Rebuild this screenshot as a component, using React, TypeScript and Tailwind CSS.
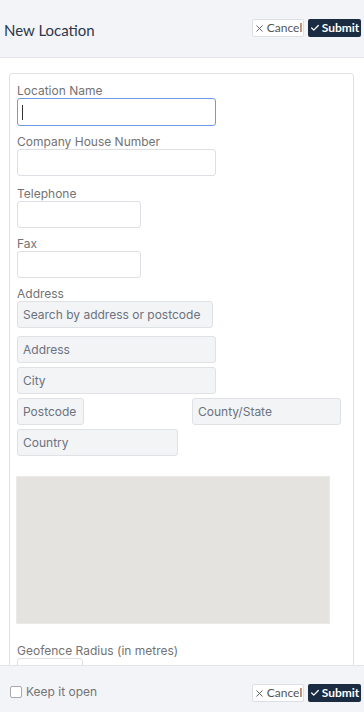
import { Check, X } from 'lucide-react'

const label = 'block text-[12px] leading-[14px] text-[#737373]'
const input = 'block h-[27px] rounded-[3px] border border-[#dcdfe4] bg-white'
const filled = 'flex items-center h-[27px] rounded-[3px] border border-[#dfe1e5] bg-[#f3f4f6] px-[5px] text-[12px] whitespace-nowrap text-[#6b7280]'

function Buttons() {
  return (
    <div className="flex items-center gap-[4px] font-['Lato',sans-serif]">
      <button className="flex items-center justify-center w-[52px] h-[18px] border border-[#dcdfe4] rounded-[2px] bg-white text-[12px] text-[#555]">
        <X size={11} strokeWidth={2} className="mr-[2px]" />Cancel
      </button>
      <button className="flex items-center justify-center w-[53px] h-[18px] rounded-[2px] bg-[#1a2b42] text-[12px] font-bold text-white">
        <Check size={10} strokeWidth={3} className="mr-[2px]" />Submit
      </button>
    </div>
  )
}

export default function App() {
  return (
    <div className="h-[712px] w-[364px] flex flex-col overflow-hidden bg-white font-['Inter',sans-serif]">
      <div className="h-[58px] shrink-0 flex items-center justify-between pl-[4px] pr-[3px] bg-[#f3f4f8] border-b border-[#e3e5ea]">
        <span className="text-[15px] text-[#2d3748] font-['Lato',sans-serif] mt-[3px]">New Location</span>
        <div className="-mt-[1px]"><Buttons /></div>
      </div>

      <div className="flex-1 overflow-hidden pt-[15px] pl-[9px] pr-[10px]">
        <div className="border border-[#e2e2e2] rounded-[3px] pl-[7px] pr-[12px] pt-[10px] pb-[20px]">
          <label className={label}>Location Name</label>
          <div className="h-[28px] w-[199px] rounded-[3px] border-[1.5px] border-[#6d9be8] bg-white flex items-center pl-[4px]">
            <span className="block w-px h-[15px] bg-[#333]" />
          </div>

          <label className={`${label} mt-[9px]`}>Company House Number</label>
          <div className={`${input} w-[199px]`} />

          <label className={`${label} mt-[11px]`}>Telephone</label>
          <div className={`${input} w-[124px]`} />

          <label className={`${label} mt-[9px]`}>Fax</label>
          <div className={`${input} w-[124px]`} />

          <label className={`${label} mt-[9px]`}>Address</label>
          <div className={`${filled} w-[196px]`}>Search by address or postcode</div>

          <div className={`${filled} w-[199px] mt-[8px]`}>Address</div>
          <div className={`${filled} w-[199px] mt-[4px]`}>City</div>
          <div className="flex justify-between mt-[4px]">
            <div className={`${filled} w-[67px]`}>Postcode</div>
            <div className={`${filled} w-[149px]`}>County/State</div>
          </div>
          <div className={`${filled} w-[161px] mt-[4px]`}>Country</div>

          <div className="mt-[20px] -ml-[1px] h-[148px] w-[314px] bg-[#e5e3df] border border-[#ebeae7]" />

          <label className={`${label} mt-[20px]`}>Geofence Radius (in metres)</label>
          <div className={`${input} w-[66px]`} />
        </div>
      </div>

      <div className="h-[47px] shrink-0 flex items-center justify-between pl-[10px] pr-[3px] pt-[8px] bg-[#f3f4f8] border-t border-[#e3e5ea]">
        <div className="flex items-center gap-[4px] -mt-[2px]">
          <span className="block w-[12px] h-[12px] rounded-[2px] border border-[#a9a9a9] bg-white" />
          <span className="text-[12px] text-[#737373]">Keep it open</span>
        </div>
        <Buttons />
      </div>
    </div>
  )
}
